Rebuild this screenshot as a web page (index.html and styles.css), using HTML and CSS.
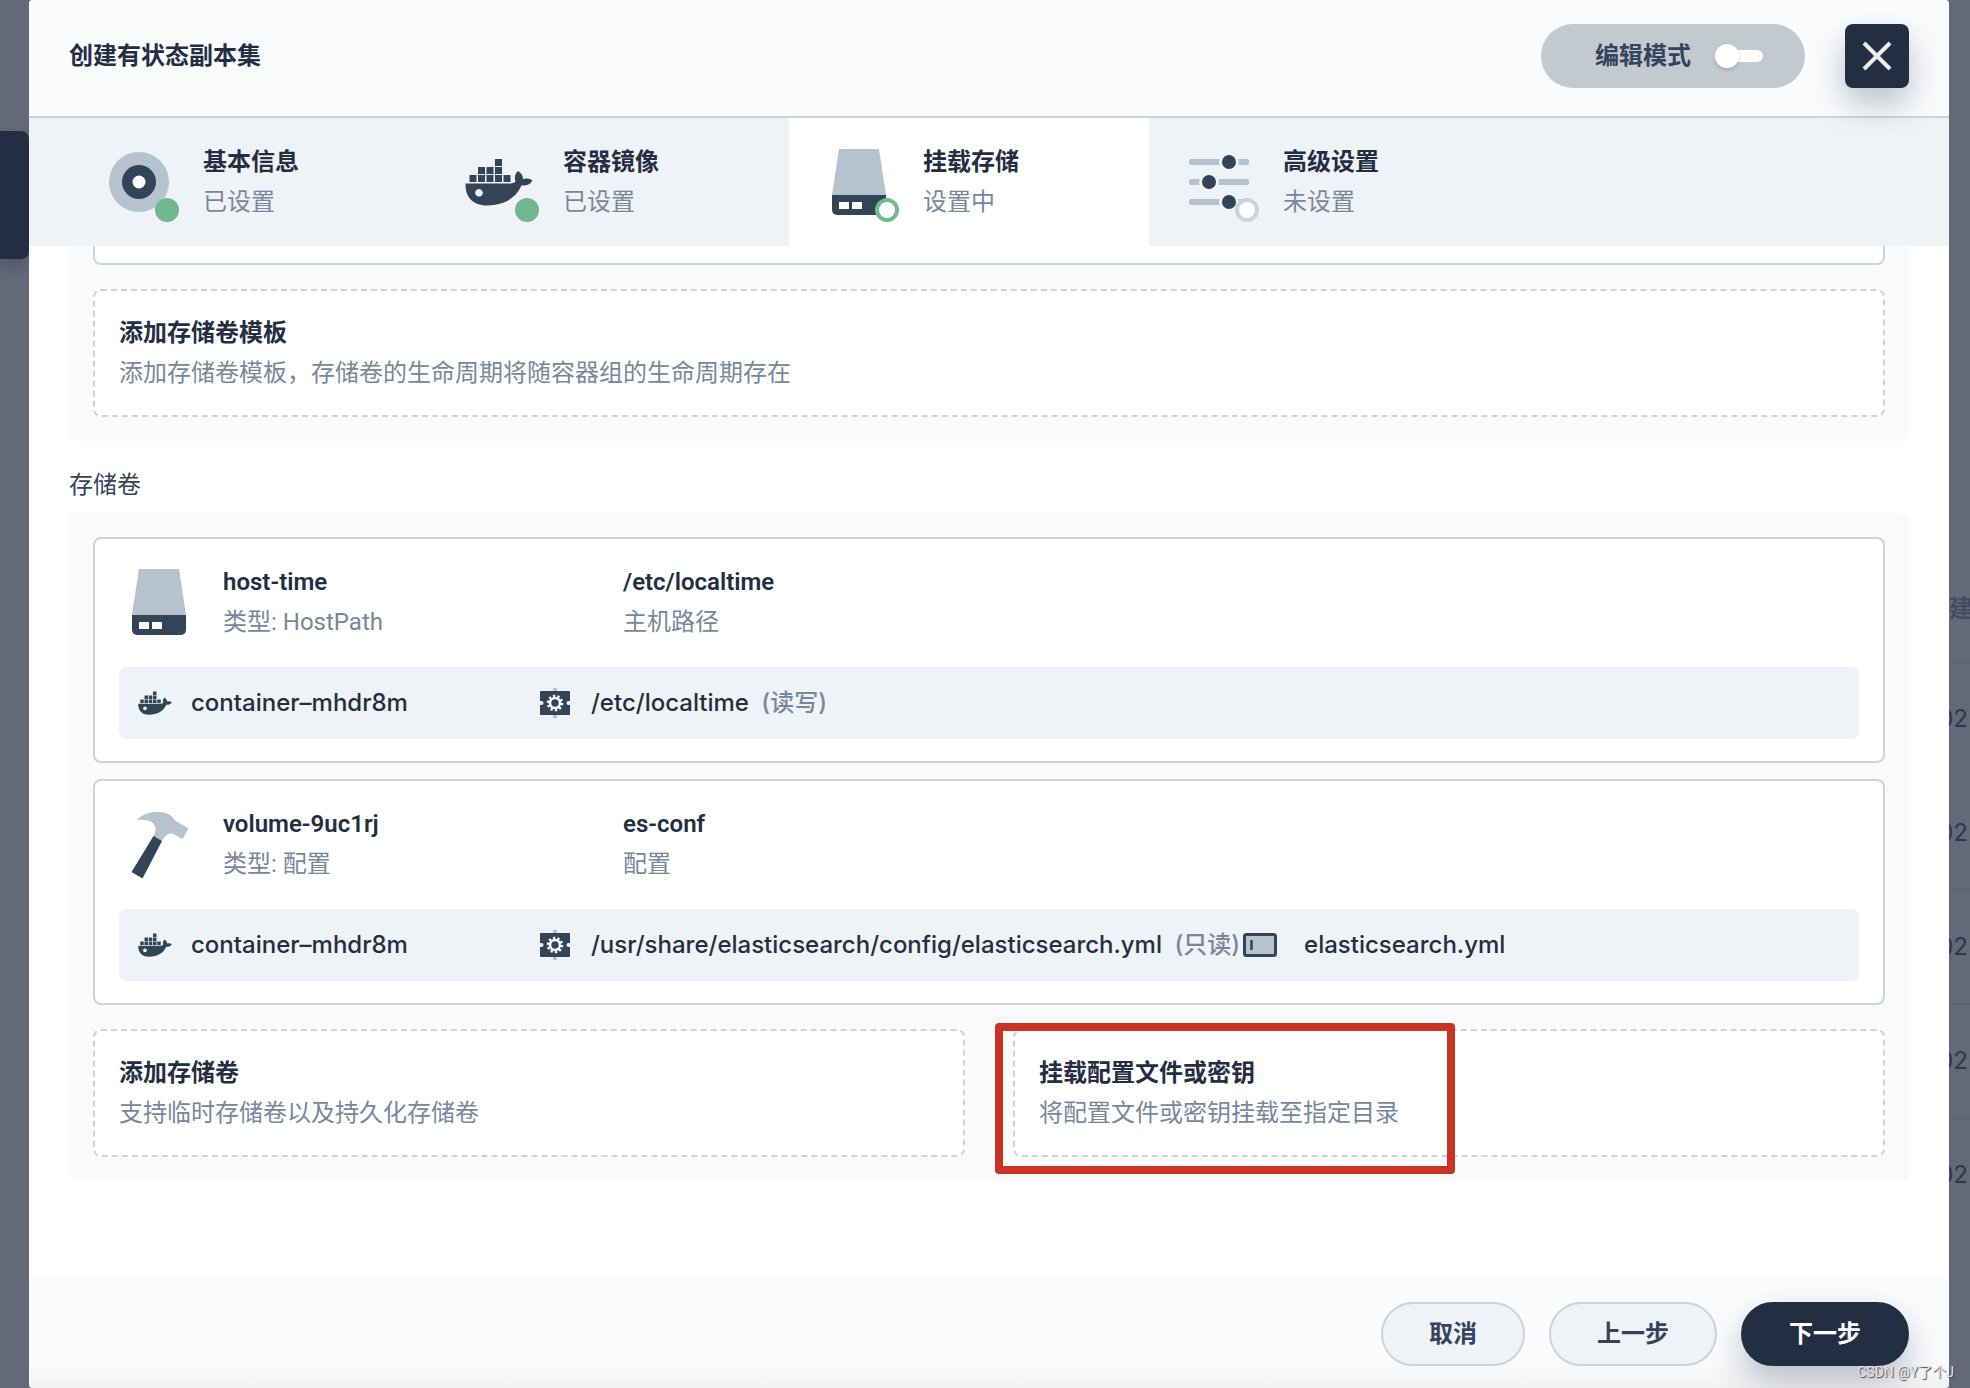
FILE: index.html
```html
<!DOCTYPE html>
<html lang="zh-CN">
<head>
<meta charset="utf-8">
<title>创建有状态副本集</title>
<link rel="stylesheet" href="styles.css">
</head>
<body>
<svg class="sprite" aria-hidden="true">
  <symbol id="docker" viewBox="0 0 80 80">
    <path fill="#324558" d="M36 17h7v7h-7zM19 25h7v7h-7zM27.500 25h7v7h-7zM36 25h7v7h-7zM10.500 33h7v7h-7zM19 33h7v7h-7zM27.500 33h7v7h-7zM36 33h7v7h-7zM44.500 33h7v7h-7z"/>
    <path fill="#324558" fill-rule="evenodd" d="M6.500 41.500H50c3 0 5-.5 6.500-2C55 35 56 32 59 29c4 3 5 5 5 8 3-1 6-.5 9.500 1-2 4.500-5 5.500-11 5.500C57 56 45 63.500 28 63.500 13 63.500 6 54 6.500 41.500zM20 47a3.800 3.800 0 1 0 .01 0z"/>
  </symbol>
  <symbol id="drive" viewBox="0 0 80 80">
    <path fill="#b6c2cd" d="M20 7h40l7 46H13z"/>
    <path fill="#324558" d="M13 53h54v15a5 5 0 0 1-5 5H18a5 5 0 0 1-5-5z"/>
    <path fill="#fff" d="M20 60h10v7H20zM33 60h10v7H33z"/>
  </symbol>
  <symbol id="gear" viewBox="0 0 40 40">
    <path fill="#b6c2cd" d="M18 5h4v4h-4zM18 31h4v4h-4z"/>
    <rect x="5" y="8" width="30" height="24" rx="1" fill="#324558"/>
    <path fill="#eff2f7" d="M5 18h1.500a2 2 0 0 1 0 4H5zM35 18h-1.500a2 2 0 0 0 0 4H35z"/>
    <circle cx="20" cy="20" r="7" fill="none" stroke="#fff" stroke-width="2.600" stroke-dasharray="2.200 2.200"/>
    <circle cx="20" cy="20" r="5" fill="none" stroke="#fff" stroke-width="2.600"/>
  </symbol>
</svg>

<div class="page">
  <aside class="behind behind-left" aria-hidden="true"><div class="behind-card"></div></aside>

  <main class="modal">
    <header class="modal-header">
      <h1 class="modal-title">创建有状态副本集</h1>
      <label class="mode">编辑模式<input class="switch" type="checkbox"></label>
      <button class="close" type="button" aria-label="关闭">
        <svg width="40" height="40" viewBox="0 0 40 40"><path d="M7 7l26 26M33 7L7 33" stroke="#eceded" stroke-width="4" fill="none"/></svg>
      </button>
    </header>

    <nav class="steps">
      <button class="step" type="button">
        <span class="step-icon"><svg viewBox="0 0 80 80"><circle cx="40" cy="40" r="30" fill="#b6c2cd"/><circle cx="40" cy="40" r="17" fill="#324558"/><circle cx="40" cy="40" r="6.500" fill="#fff"/></svg><i class="dot dot-done"></i></span>
        <span class="pair"><strong>基本信息</strong><span>已设置</span></span>
      </button>
      <button class="step" type="button">
        <span class="step-icon"><svg><use href="#docker"/></svg><i class="dot dot-done"></i></span>
        <span class="pair"><strong>容器镜像</strong><span>已设置</span></span>
      </button>
      <button class="step step-active" type="button">
        <span class="step-icon"><svg><use href="#drive"/></svg><i class="dot dot-current"></i></span>
        <span class="pair"><strong>挂载存储</strong><span>设置中</span></span>
      </button>
      <button class="step" type="button">
        <span class="step-icon"><svg viewBox="0 0 80 80"><g fill="#b6c2cd"><rect x="10" y="17" width="60" height="6" rx="2"/><rect x="10" y="37" width="60" height="6" rx="2"/><rect x="10" y="57" width="60" height="6" rx="2"/></g><g fill="#324558" stroke="#eff2f7" stroke-width="3"><circle cx="50" cy="20" r="8.500"/><circle cx="30" cy="40" r="8.500"/><circle cx="50" cy="60" r="8.500"/></g></svg><i class="dot dot-todo"></i></span>
        <span class="pair"><strong>高级设置</strong><span>未设置</span></span>
      </button>
    </nav>

    <div class="content">
      <section class="panel panel-scrolled">
        <div class="card-end"></div>
        <div class="adders">
          <button class="adder" type="button"><span class="pair"><strong>添加存储卷模板</strong><span>添加存储卷模板，存储卷的生命周期将随容器组的生命周期存在</span></span></button>
        </div>
      </section>

      <h2 class="label">存储卷</h2>
      <section class="panel">
        <article class="card">
          <div class="card-head">
            <svg class="card-icon"><use href="#drive"/></svg>
            <div class="pair name"><strong>host-time</strong><span>类型: HostPath</span></div>
            <div class="pair"><strong>/etc/localtime</strong><span>主机路径</span></div>
          </div>
          <div class="mount">
            <div class="mount-container"><svg class="mini"><use href="#docker"/></svg><span>container–mhdr8m</span></div>
            <div class="mount-path"><svg class="mini"><use href="#gear"/></svg><span>/etc/localtime <span class="mode-text">(读写)</span></span></div>
          </div>
        </article>

        <article class="card">
          <div class="card-head">
            <svg class="card-icon" viewBox="0 0 80 80"><path fill="#b6c2cd" d="M17.500 16C24 10 31 8 38 8c8-.5 15 3 18 8.500l13.500 8-6 10.500-8-4.500c-6-3-10 2-12.500 6.500L34.500 32.500C39 24 37 14 17.500 16z"/><path fill="#324558" d="M34.500 32l8.500 5-19.500 37.500-11-6.500z"/></svg>
            <div class="pair name"><strong>volume-9uc1rj</strong><span>类型: 配置</span></div>
            <div class="pair"><strong>es-conf</strong><span>配置</span></div>
          </div>
          <div class="mount">
            <div class="mount-container"><svg class="mini"><use href="#docker"/></svg><span>container–mhdr8m</span></div>
            <div class="mount-path"><svg class="mini"><use href="#gear"/></svg><span>/usr/share/elasticsearch/config/elasticsearch.yml <span class="mode-text">(只读)</span></span></div>
            <div class="mount-file"><svg class="mini" viewBox="0 0 40 40"><rect x="4.500" y="9.500" width="31" height="21" rx="2" fill="#b6c2cd" stroke="#324558" stroke-width="3"/><path d="M11.500 15v10" stroke="#324558" stroke-width="2.500"/></svg><span>elasticsearch.yml</span></div>
          </div>
        </article>

        <div class="adders">
          <button class="adder" type="button"><span class="pair"><strong>添加存储卷</strong><span>支持临时存储卷以及持久化存储卷</span></span></button>
          <button class="adder adder-marked" type="button"><span class="pair"><strong>挂载配置文件或密钥</strong><span>将配置文件或密钥挂载至指定目录</span></span></button>
        </div>
      </section>
    </div>

    <footer class="modal-footer">
      <button class="btn" type="button">取消</button>
      <button class="btn btn-wide" type="button">上一步</button>
      <button class="btn btn-wide btn-primary" type="button">下一步</button>
    </footer>
  </main>

  <aside class="behind behind-right" aria-hidden="true">
    <div class="behind-cell behind-head">建</div>
    <div class="behind-cell">02</div>
    <div class="behind-cell">02</div>
    <div class="behind-cell">02</div>
    <div class="behind-cell">02</div>
    <div class="behind-cell">02</div>
  </aside>
  <div class="watermark">CSDN @Y了个J</div>
</div>
</body>
</html>
```
FILE: styles.css
```css
*,
*::before,
*::after { box-sizing: border-box; }

body {
  margin: 0;
  background: #636977;
  color: #242e42;
  font: 400 24px/40px Roboto, "Noto Sans CJK SC", sans-serif;
}

button {
  margin: 0;
  padding: 0;
  border: 0;
  background: none;
  color: inherit;
  font: inherit;
  text-align: left;
  cursor: pointer;
}

svg { display: block; }

.sprite {
  position: absolute;
  width: 0;
  height: 0;
}

.page {
  position: relative;
  display: grid;
  grid-template-columns: 29px minmax(0, 1fr) 21px;
  min-height: 100vh;
  overflow: hidden;
}

/* dimmed page on both sides of the dialog */
.behind { overflow: hidden; }

.behind-left { padding-top: 131px; }

.behind-card {
  height: 128px;
  border-radius: 0 8px 8px 0;
  background: #242e42;
  box-shadow: 0 8px 16px rgba(36, 46, 66, .3);
}

.behind-right {
  padding-top: 557px;
  color: #2f374b;
  font-family: Inter, "Noto Sans CJK SC", sans-serif;
}

.behind-cell {
  display: flex;
  align-items: center;
  justify-content: flex-end;
  height: 114px;
  padding-right: 2px;
  border-bottom: 2px solid #5e6474;
}

.behind-head {
  justify-content: flex-start;
  height: 106px;
  color: #454c60;
  font-weight: 700;
}

.modal {
  display: flex;
  flex-direction: column;
  border-radius: 4px;
  background: #fff;
  overflow: hidden;
}

.modal-header {
  display: flex;
  align-items: center;
  gap: 40px;
  padding: 24px 40px 28px;
  border-bottom: 2px solid #ccd3db;
  background: #f9fbfd;
}

.modal-title {
  flex: 1;
  margin: 0;
  font-size: 24px;
  font-weight: 600;
}

.mode {
  display: flex;
  align-items: center;
  gap: 24px;
  height: 64px;
  padding: 0 42px 0 54px;
  border-radius: 32px;
  background: #c3c9d1;
  color: #36435c;
  font-weight: 600;
}

.switch {
  appearance: none;
  display: flex;
  align-items: center;
  width: 48px;
  height: 12px;
  margin: 0;
  border-radius: 6px;
  background: #fff;
}

.switch::before {
  content: "";
  width: 24px;
  height: 24px;
  flex: none;
  border-radius: 50%;
  background: #fff;
  box-shadow: 0 2px 4px rgba(36, 46, 66, .2);
}

.close {
  display: grid;
  place-items: center;
  width: 64px;
  height: 64px;
  border-radius: 8px;
  background: #242e42;
  box-shadow: 0 16px 32px rgba(36, 46, 66, .28);
  z-index: 1;
}

.steps {
  display: flex;
  padding: 0 40px;
  background: #eff2f7;
}

.step {
  display: flex;
  gap: 24px;
  width: 360px;
  padding: 24px 30px;
}

.step-active { background: #fff; }

.step-icon {
  position: relative;
  width: 80px;
  height: 80px;
}

.step-icon svg {
  width: 80px;
  height: 80px;
}

.dot {
  position: absolute;
  right: 0;
  bottom: 0;
  width: 24px;
  height: 24px;
  border: 4px solid #70b98e;
  border-radius: 50%;
  background: #fff;
}

.dot-done { background: #70b98e; }

.dot-todo { border-color: #ccd3db; }

.pair {
  display: flex;
  flex-direction: column;
  color: #79879c;
}

.pair strong {
  color: #242e42;
  font-weight: 600;
}

.content {
  flex: 1;
  padding: 0 40px 96px;
}

.panel {
  padding: 24px;
  border-radius: 8px;
  background: #f9fafc;
}

.panel-scrolled {
  padding-top: 0;
  border-radius: 0 0 8px 8px;
}

.card-end {
  height: 19px;
  border: 2px solid #ccd3db;
  border-top: 0;
  border-radius: 0 0 8px 8px;
  background: #fff;
}

.label {
  margin: 24px 0 8px;
  color: #36435c;
  font-size: 24px;
  font-weight: 400;
}

.card {
  padding: 23px 24px 22px;
  border: 2px solid #ccd3db;
  border-radius: 8px;
  background: #fff;
}

.card + .card { margin-top: 16px; }

.card-head {
  display: flex;
  margin-bottom: 25px;
}

.card-icon {
  width: 80px;
  height: 80px;
  margin-right: 24px;
}

.name { width: 400px; }

.mount {
  display: flex;
  padding: 16px;
  border-radius: 8px;
  background: #eff2f7;
  font-family: Inter, "Noto Sans CJK SC", sans-serif;
  font-weight: 500;
}

.mount > div {
  display: flex;
  gap: 16px;
  white-space: nowrap;
}

.mount > .mount-container { width: 400px; }

.mount > .mount-file { gap: 24px; }

.mini {
  flex: none;
  width: 40px;
  height: 40px;
}

.mode-text {
  margin-left: 6px;
  color: #79879c;
}

.adders {
  display: flex;
  gap: 48px;
  margin-top: 24px;
}

.adder {
  position: relative;
  flex: 1;
  padding: 22px 24px;
  border: 2px dashed #ccd3db;
  border-radius: 8px;
  background: #fff;
}

/* red annotation frame over the second option */
.adder-marked::after {
  content: "";
  position: absolute;
  top: -8px;
  left: -20px;
  width: 460px;
  height: 151px;
  border: 8px solid #ca3323;
  border-radius: 4px;
}

.modal-footer {
  display: flex;
  justify-content: flex-end;
  gap: 24px;
  padding: 24px 40px 22px;
  background: linear-gradient(to top, #f1f2f4, #f9fbfd 28px);
}

.btn {
  width: 144px;
  height: 64px;
  border: 2px solid #ccd3db;
  border-radius: 32px;
  background: #eff2f7;
  color: #36435c;
  font-weight: 600;
  text-align: center;
}

.btn-wide { width: 168px; }

.btn-primary {
  border-color: #242e42;
  background: #242e42;
  box-shadow: 0 16px 32px rgba(36, 46, 66, .28);
  color: #fff;
}

.watermark {
  position: absolute;
  right: 16px;
  bottom: 4px;
  color: #e4e5e8;
  font-size: 14px;
  line-height: 24px;
  text-shadow: 1px 1px 1px #444;
}
```
